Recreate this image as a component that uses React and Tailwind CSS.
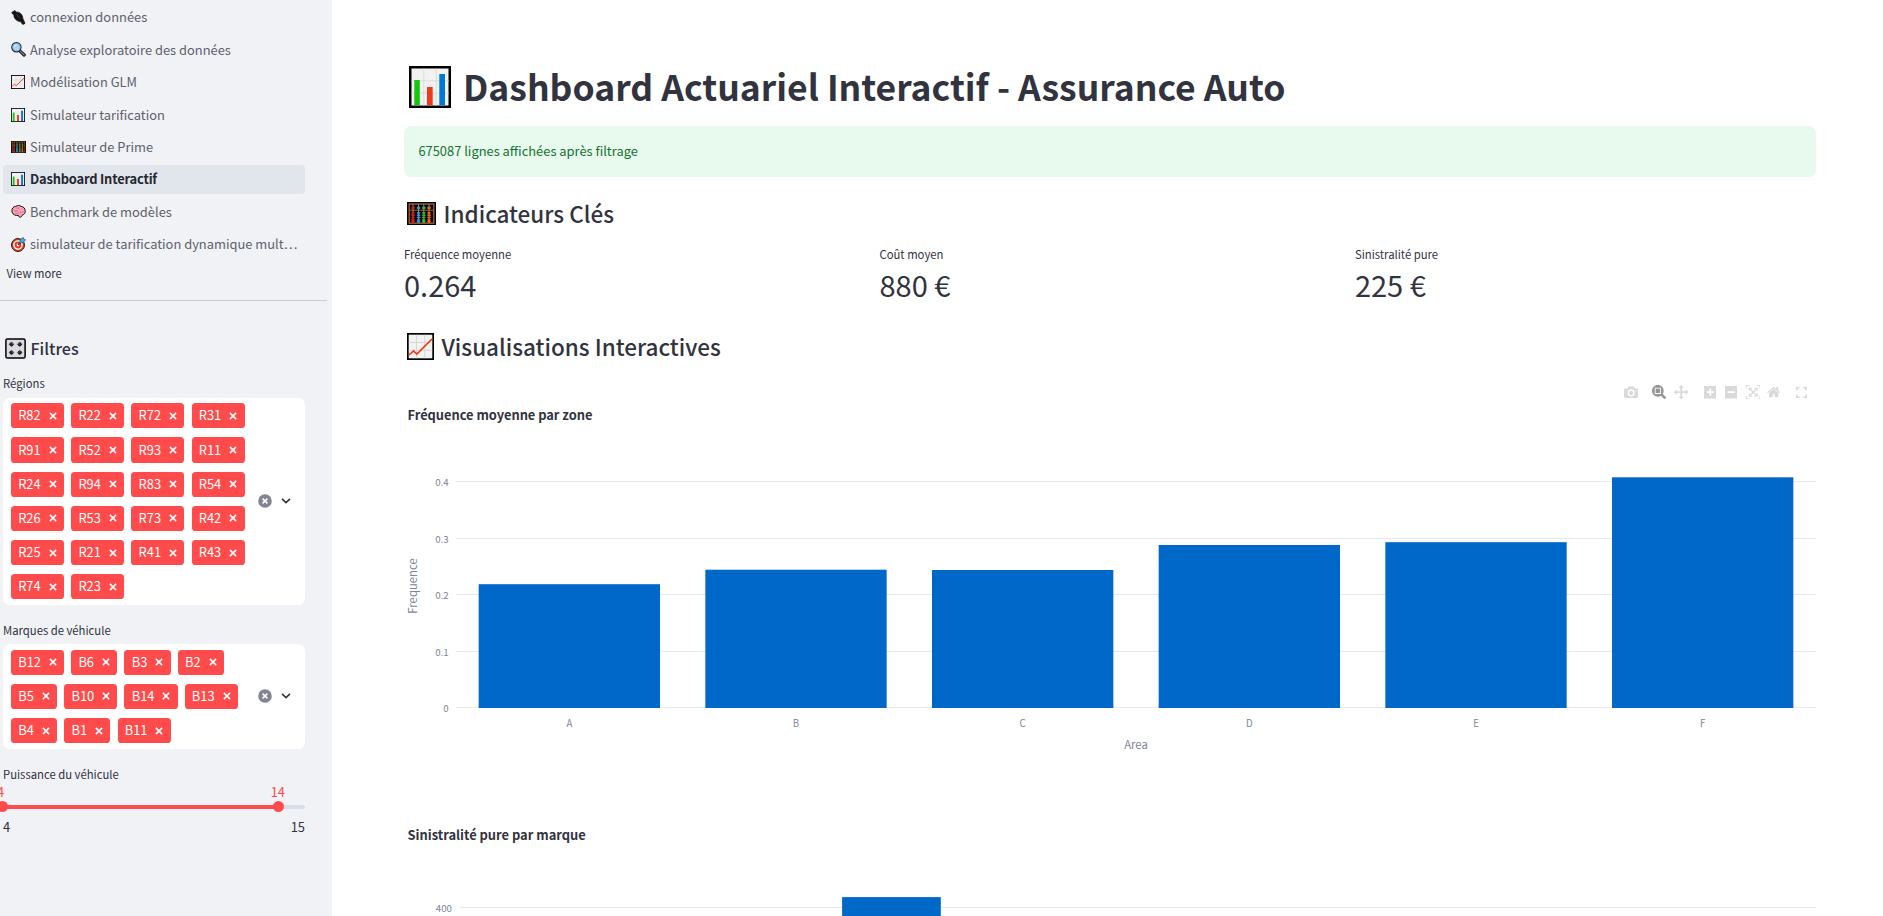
import React from "react";

const FONT = "font-['Noto_Sans_CJK_SC','Noto_Sans_CJK_JP','Open_Sans',sans-serif]";

/* ---------- emoji-like pictograms ---------- */

function ChartUp({ className }) {
  return (
    <svg viewBox="0 0 27 27" className={className}>
      <rect x="0" y="0" width="27" height="27" fill="#000" />
      <rect x="1.7" y="1.7" width="23.6" height="23.6" fill="#f2f2f2" />
      <path d="M9.5 1.7V25.3M17.7 1.7V25.3M1.7 9.5H25.3M1.7 17.3H25.3" stroke="#d2d2d2" strokeWidth="0.9" />
      <path d="M2 22L6.5 17.8L9.8 21L25 6" fill="none" stroke="#f03a17" strokeWidth="1.7" />
    </svg>
  );
}

function BarChart({ className }) {
  return (
    <svg viewBox="0 0 42 42" className={className}>
      <rect width="42" height="42" fill="#000" />
      <rect x="2.5" y="2.5" width="37" height="37" fill="#f2f2f2" />
      <path d="M14.8 2.5V39.5M27.2 2.5V39.5M2.5 14.8H39.5M2.5 27.2H39.5" stroke="#dcdcdc" strokeWidth="1" />
      <rect x="5.3" y="14" width="5.5" height="25.2" fill="#16c60c" />
      <rect x="18" y="21" width="5.7" height="18.2" fill="#f03a17" />
      <rect x="30.3" y="8" width="5.7" height="31.2" fill="#0078d7" />
    </svg>
  );
}

function Abacus({ className }) {
  const cols = [
    { x: 6, c: "#e81224" },
    { x: 11.5, c: "#3a96dd" },
    { x: 16.8, c: "#2dbb2d" },
    { x: 22, c: "#f7630c" },
  ];
  return (
    <svg viewBox="0 0 29 23" className={className} preserveAspectRatio="none">
      <rect width="29" height="23" fill="#000" />
      <rect x="2.2" y="2" width="24.6" height="19.2" fill="none" stroke="#a0673c" strokeWidth="1.3" />
      <path d="M2 8.2H27" stroke="#a0673c" strokeWidth="1" />
      {cols.map((k) => (
        <g key={k.x}>
          <path d={`M${k.x} 2.2V21`} stroke="#c9a184" strokeWidth="0.8" />
          <ellipse cx={k.x} cy="5.9" rx="1.9" ry="1.3" fill={k.c} />
          {[11, 13.3, 15.6, 17.9, 19.8].map((y) => (
            <ellipse key={y} cx={k.x} cy={y} rx="1.9" ry="1" fill={k.c} />
          ))}
        </g>
      ))}
    </svg>
  );
}

function Plug({ className }) {
  return (
    <svg viewBox="0 0 15 15" className={className}>
      <path d="M0.8 2.4L4 0.6L5.2 2.2C8.4 1.8 11.6 4 11.8 8.4L14 13.4L11.8 14.4L9.4 11.6C5.2 11.2 2.5 7.8 3 4.8L1.2 3.6Z" fill="#161616" stroke="#111" strokeWidth="0.8" />
      <path d="M5.5 4.2L8.5 8.2" stroke="#4c4c4c" strokeWidth="0.7" />
    </svg>
  );
}

function Magnifier({ className }) {
  return (
    <svg viewBox="0 0 15 15" className={className}>
      <path d="M8.8 8.8L13.2 13" stroke="#16191c" strokeWidth="3.2" strokeLinecap="round" />
      <path d="M9.4 9.4L13.1 12.9" stroke="#8a959c" strokeWidth="1.3" strokeLinecap="round" />
      <circle cx="5.4" cy="5.2" r="4.6" fill="#a5d4f7" stroke="#1d2a33" strokeWidth="1.2" />
      <circle cx="5.4" cy="5.2" r="3.7" fill="none" stroke="#7ba8c8" strokeWidth="0.6" />
      <path d="M3.2 4.8A2.4 2.4 0 0 1 5.4 2.8" stroke="#e3f3fe" strokeWidth="0.9" fill="none" />
    </svg>
  );
}

function Brain({ className }) {
  return (
    <svg viewBox="0 0 15 13" className={className}>
      <path d="M1 6.8C0.3 3.6 2.6 1.4 4.8 1.3C6.6 0.2 9 0.4 10.2 1.4C12.6 1.6 14.2 3.6 14.1 5.8C14.6 8.2 13 9.6 11.6 9.8C11.2 11 10 12.3 9 12.3C7.8 12.2 7.8 11 7.4 10.4C4.4 10.8 1.6 9.6 1 6.8Z" fill="#f4a3b4" stroke="#1c1114" strokeWidth="1" />
      <path d="M3 6.2C4.2 4.8 5.4 6.8 7 5.6M5 2.8C6.4 3.8 7.6 2.4 8.6 4M9 7.4C10.6 8 11.4 6.2 12.8 6.8M4.4 8.2C5.6 7.4 6.4 8.8 7.6 8" stroke="#d9687f" strokeWidth="0.8" fill="none" />
    </svg>
  );
}

function Dart({ className }) {
  return (
    <svg viewBox="0 0 15 15" className={className}>
      <circle cx="7" cy="8" r="6.5" fill="#e93a1c" stroke="#151515" strokeWidth="0.9" />
      <circle cx="7" cy="8" r="4.1" fill="none" stroke="#fff" strokeWidth="1.4" />
      <circle cx="7" cy="8" r="1.4" fill="#fff" />
      <path d="M7 8L11 4" stroke="#16334a" strokeWidth="1.2" />
      <path d="M8.6 6.2L9.4 2.8L12.2 0.3L12.7 2.2L14.7 2.7L12.2 5.4Z" fill="#2fb4ea" stroke="#12506f" strokeWidth="0.6" />
    </svg>
  );
}

function ControlKnobs({ className }) {
  return (
    <svg viewBox="0 0 21 21" className={className}>
      <rect x="0.9" y="0.9" width="19.2" height="19.2" rx="1.6" fill="#dcdce0" stroke="#000" strokeWidth="1.5" />
      {[[6.5, 6.3], [14.7, 6.3], [6.5, 14.6], [14.7, 14.6]].map(([x, y], i) => (
        <g key={i}>
          <path d={`M${x - 3} ${y}H${x + 3}M${x} ${y - 2.8}V${y + 2.8}`} stroke="#a9a9ae" strokeWidth="0.8" />
          <circle cx={x} cy={y} r="2.1" fill="#1b1b1d" />
          <circle cx={i % 2 ? x - 0.7 : x + 0.6} cy={y - 0.6} r="0.7" fill="#77777c" />
        </g>
      ))}
    </svg>
  );
}

/* ---------- sidebar ---------- */

const NAV = [
  { label: "connexion données", icon: <Plug className="h-[15px] w-[15px]" /> },
  { label: "Analyse exploratoire des données", icon: <Magnifier className="h-[15px] w-[15px]" /> },
  { label: "Modélisation GLM", icon: <ChartUp className="h-[14px] w-[14px]" /> },
  { label: "Simulateur tarification", icon: <BarChart className="h-[14px] w-[14px]" /> },
  { label: "Simulateur de Prime", icon: <Abacus className="h-[12px] w-[15px]" /> },
  { label: "Dashboard Interactif", icon: <BarChart className="h-[14px] w-[14px]" />, active: true },
  { label: "Benchmark de modèles", icon: <Brain className="h-[13px] w-[15px]" /> },
  { label: "simulateur de tarification dynamique mult…", icon: <Dart className="h-[15px] w-[15px]" /> },
];

const REGIONS = [
  "R82", "R22", "R72", "R31", "R91", "R52", "R93", "R11", "R24", "R94", "R83",
  "R54", "R26", "R53", "R73", "R42", "R25", "R21", "R41", "R43", "R74", "R23",
];
const MARQUES = ["B12", "B6", "B3", "B2", "B5", "B10", "B14", "B13", "B4", "B1", "B11"];

function Tag({ label }) {
  return (
    <span className={`flex h-[25.2px] items-center rounded-[3.6px] bg-[#ff4b4b] pl-[7.2px] text-white ${label.length > 2 ? "w-[53.1px]" : "w-[46.2px]"}`}>
      <span className="flex-1 text-[12.9px] leading-none">{label}</span>
      <svg viewBox="0 0 8 8" className="mr-[7.2px] h-[8px] w-[8px]">
        <path d="M0.9 0.9L7.1 7.1M7.1 0.9L0.9 7.1" stroke="#fff" strokeWidth="1.6" />
      </svg>
    </span>
  );
}

function MultiSelect({ values, className }) {
  return (
    <div className={`flex w-[302px] items-center rounded-[7.2px] bg-white ${className}`}>
      <div className="ml-[8px] flex w-[245px] flex-wrap gap-x-[7.1px] gap-y-[9px]">
        {values.map((v) => (
          <Tag key={v} label={v} />
        ))}
      </div>
      <svg viewBox="0 0 14 14" className="ml-[1.7px] h-[14px] w-[14px]">
        <circle cx="7" cy="7" r="6.8" fill="#808495" />
        <path d="M4.6 4.6L9.4 9.4M9.4 4.6L4.6 9.4" stroke="#fff" strokeWidth="1.6" />
      </svg>
      <svg viewBox="0 0 10 6" className="ml-[9.8px] h-[6px] w-[10px]">
        <path d="M1 0.8L5 4.6L9 0.8" stroke="#31333f" strokeWidth="1.6" fill="none" />
      </svg>
    </div>
  );
}

function Sidebar() {
  return (
    <aside className="h-[916px] w-[332px] shrink-0 overflow-hidden bg-[#f0f2f6] text-[#31333f]">
      <nav className="flex flex-col gap-[3.6px] pl-[3px] pt-[3px]">
        {NAV.map((n) => (
          <div
            key={n.label}
            className={`flex h-[28.8px] w-[302px] items-center rounded-[3.6px] pl-[8px] ${n.active ? "bg-[#e1e6ed] font-bold tracking-[-0.19px] text-[#262730]" : "text-[#5f616b]"}`}
          >
            <span className="flex w-[19px] items-center">{n.icon}</span>
            <span className="whitespace-nowrap text-[12.9px] leading-[20px]">{n.label}</span>
          </div>
        ))}
      </nav>
      <div className="mt-[4.8px] pl-[6.5px] text-[11.3px] leading-[20px]">View more</div>
      <div className="mt-[17px] h-px w-[327px] bg-[#c9cbd1]" />
      <div className="mt-[35px] flex h-[24px] items-center pl-[4.5px]">
        <ControlKnobs className="h-[21px] w-[21px]" />
        <h2 className="ml-[5px] text-[16.1px] font-medium leading-[24px]">Filtres</h2>
      </div>
      <div className="pl-[3px]">
        <div className="mt-[13px] text-[11.3px] leading-[20px]">Régions</div>
        <MultiSelect values={REGIONS} className="mt-[4.5px] h-[207px]" />
        <div className="mt-[15px] text-[11.3px] leading-[20px]">Marques de véhicule</div>
        <MultiSelect values={MARQUES} className="mt-[4px] h-[105px]" />
        <div className="mt-[15px] text-[11.3px] leading-[20px]">Puissance du véhicule</div>
        <div className="flex h-[16px] w-[302px] justify-between text-[12.9px] leading-[16px] text-[#ff4b4b]">
          <span className="-ml-[6px]">4</span>
          <span className="mr-[20px]">14</span>
        </div>
        <div className="relative mt-[5px] h-[4px] w-[302px] rounded-full bg-[#d9deea]">
          <div className="h-[4px] w-[275px] bg-[#ff4b4b]" />
          <div className="absolute -left-[6px] -top-[3.5px] h-[11px] w-[11px] rounded-full bg-[#ff4b4b]" />
          <div className="absolute left-[269.5px] -top-[3.5px] h-[11px] w-[11px] rounded-full bg-[#ff4b4b]" />
        </div>
        <div className="mt-[8px] flex w-[302px] justify-between text-[12.9px] leading-[20px]">
          <span>4</span>
          <span>15</span>
        </div>
      </div>
    </aside>
  );
}

/* ---------- charts ---------- */

const ICONS = {
  camera: [1000, "m500 450c-83 0-150-67-150-150 0-83 67-150 150-150 83 0 150 67 150 150 0 83-67 150-150 150z m400 150h-120c-16 0-34 13-39 29l-31 93c-6 15-23 28-40 28h-340c-16 0-34-13-39-28l-31-94c-6-15-23-28-40-28h-120c-55 0-100-45-100-100v-450c0-55 45-100 100-100h800c55 0 100 45 100 100v450c0 55-45 100-100 100z m-400-550c-138 0-250 112-250 250 0 138 112 250 250 250 138 0 250-112 250-250 0-138-112-250-250-250z m365 380c-19 0-35 16-35 35 0 19 16 35 35 35 19 0 35-16 35-35 0-19-16-35-35-35z"],
  zoom: [1000, "m1000-25l-250 251c40 63 63 138 63 218 0 224-182 406-407 406-224 0-406-182-406-406s183-406 407-406c80 0 155 22 218 62l250-250 125 125z m-812 250l0 438 437 0 0-438-437 0z m62 375l313 0 0-312-313 0 0 312z"],
  pan: [1000, "m1000 350l-187 188 0-125-250 0 0 250 125 0-188 187-187-187 125 0 0-250-250 0 0 125-188-188 186-187 0 125 252 0 0-250-125 0 187-188 188 188-125 0 0 250 250 0 0-126 187 188z"],
  plus: [875, "m1 787l0-875 875 0 0 875-875 0z m687-500l-187 0 0-187-125 0 0 187-188 0 0 125 188 0 0 187 125 0 0-187 187 0 0-125z"],
  minus: [875, "m0 788l0-876 875 0 0 876-875 0z m688-500l-500 0 0 125 500 0 0-125z"],
  auto: [1000, "m250 850l-187 0-63 0 0-62 0-188 63 0 0 188 187 0 0 62z m688 0l-188 0 0-62 188 0 0-188 62 0 0 188 0 62-62 0z m-875-938l0 188-63 0 0-188 0-62 63 0 187 0 0 62-187 0z m875 188l0-188-188 0 0-62 188 0 62 0 0 62 0 188-62 0z m-125 188l-1 0-93-94-156 156 156 156 92-93 2 0 0 250-250 0 0-2 93-92-156-156-156 156 94 92 0 2-250 0 0-250 0 0 93 93 157-156-157-156-93 94 0 0 0-250 250 0 0 0-94 93 156 157 156-157-93-93 0 0 250 0 0 250z"],
  home: [928.6, "m786 296v-267q0-15-11-26t-25-10h-214v214h-143v-214h-214q-15 0-25 10t-11 26v267q0 1 0 2t0 2l321 264 321-264q1-1 1-4z m124 39l-34-41q-5-5-12-6h-2q-7 0-12 3l-386 322-386-322q-7-4-13-4-7 2-12 7l-35 41q-4 5-3 13t6 12l401 334q18 15 42 15t43-15l136-114v109q0 8 5 13t13 5h107q8 0 13-5t5-13v-227l122-102q5-5 6-12t-4-13z"],
};

function BarIcon({ name, className }) {
  const [w, d] = ICONS[name];
  return (
    <svg viewBox={`0 0 ${w} 1000`} className={`h-[14.4px] ${className}`}>
      <path d={d} transform="matrix(1 0 0 -1 0 850)" fill="currentColor" />
    </svg>
  );
}

function ModeBar() {
  return (
    <div className="flex h-[16px] items-center pl-[1220px] text-[#d9d9d9]">
      <BarIcon name="camera" className="w-[14.4px]" />
      <BarIcon name="zoom" className="ml-[13.4px] w-[14.4px] text-[#969696]" />
      <BarIcon name="pan" className="ml-[7.4px] w-[14.4px]" />
      <BarIcon name="plus" className="ml-[15.6px] w-[12.6px]" />
      <BarIcon name="minus" className="ml-[8.4px] w-[12.6px]" />
      <BarIcon name="auto" className="ml-[8.4px] w-[14.4px]" />
      <BarIcon name="home" className="ml-[7.2px] w-[13.4px]" />
      <svg viewBox="0 0 11 11" className="ml-[15.4px] h-[11px] w-[11px]">
        <path d="M0.8 3.6V0.8H3.6M7.4 0.8H10.2V3.6M10.2 7.4V10.2H7.4M3.6 10.2H0.8V7.4" fill="none" stroke="currentColor" strokeWidth="1.6" />
      </svg>
    </div>
  );
}

/* Tops are given in the chart's own coordinates, whose baseline is y = 232. */
const ZONES = [
  { k: "A", top: 108.2 },
  { k: "B", top: 93.7 },
  { k: "C", top: 94 },
  { k: "D", top: 69 },
  { k: "E", top: 66.2 },
  { k: "F", top: 1.3 },
];
const TICKS = [["0.4", 5], ["0.3", 62], ["0.2", 118], ["0.1", 175], ["0", 231]];

function ZoneChart() {
  return (
    <svg width="1412" height="284" viewBox="0 0 1412 284" className="block overflow-visible" fill="#808495">
      {TICKS.map(([t, y]) => (
        <g key={t}>
          <rect x="52" y={y} width="1360" height="1" fill="#e6e8f0" />
          <text x="44.6" y={y + 4.6} fontSize="9.7" textAnchor="end">{t}</text>
        </g>
      ))}
      {ZONES.map((z, i) => (
        <g key={z.k}>
          <rect x={52 + 226.667 * i + 22.667} y={z.top} width="181.33" height={232 - z.top} fill="#0068c9" />
          <text x={52 + 226.667 * (i + 0.5)} y="251" fontSize="9.7" textAnchor="middle">{z.k}</text>
        </g>
      ))}
      <text x="732" y="273.3" fontSize="11.3" textAnchor="middle">Area</text>
      <text transform="translate(12.6 110) rotate(-90)" fontSize="11.3" textAnchor="middle">Frequence</text>
    </svg>
  );
}

function BrandChart() {
  return (
    <svg width="1412" height="20" viewBox="0 0 1412 20" className="block" fill="#808495">
      <rect x="56" y="11" width="1356" height="1" fill="#e6e8f0" />
      <text x="48" y="15.6" fontSize="9.7" textAnchor="end">400</text>
      <rect x="438.1" y="1.1" width="98.7" height="18.9" fill="#0068c9" />
    </svg>
  );
}

/* ---------- main ---------- */

const METRICS = [
  ["Fréquence moyenne", "0.264"],
  ["Coût moyen", "880 €"],
  ["Sinistralité pure", "225 €"],
];

export default function App() {
  return (
    <div className={`flex h-[916px] w-[1883px] overflow-hidden bg-white text-[#31333f] ${FONT}`}>
      <Sidebar />
      <main className="ml-[72px] flex w-[1412px] flex-col">
        <div className="mt-[63px] flex h-[48px] items-center pl-[5px]">
          <BarChart className="h-[42px] w-[42px]" />
          <h1 className="ml-[12px] whitespace-nowrap pb-[2px] text-[35.5px] font-bold leading-[48px]">
            Dashboard Actuariel Interactif - Assurance Auto
          </h1>
        </div>
        <div className="mt-[15px] flex h-[51px] items-center rounded-[7.2px] bg-[#e8f9ee] pb-[1.5px] pl-[14.4px] text-[12.9px] text-[#177233]">
          675087 lignes affichées après filtrage
        </div>
        <div className="mt-[20px] flex h-[32px] items-center pl-[3px]">
          <Abacus className="h-[23px] w-[29px]" />
          <h3 className="ml-[7.5px] text-[22.5px] font-medium leading-[32px]">Indicateurs Clés</h3>
        </div>
        <div className="mt-[15px] grid grid-cols-3 gap-[14.4px]">
          {METRICS.map(([k, v]) => (
            <div key={k}>
              <div className="text-[11.3px] leading-[20px]">{k}</div>
              <div className="text-[29px] leading-[40px]">{v}</div>
            </div>
          ))}
        </div>
        <div className="mt-[26px] flex h-[32px] items-center pl-[3px]">
          <ChartUp className="h-[27px] w-[27px]" />
          <h3 className="ml-[7.5px] text-[22.5px] font-medium leading-[32px]">Visualisations Interactives</h3>
        </div>
        <div className="mt-[22px]">
          <ModeBar />
        </div>
        <div className="mt-[5px] pl-[3.5px] text-[12.9px] font-bold leading-[20px] tracking-[-0.04px]">Fréquence moyenne par zone</div>
        <div className="mt-[51px]">
          <ZoneChart />
        </div>
        <div className="mt-[65px] pl-[3.5px] text-[12.9px] font-bold leading-[20px]">Sinistralité pure par marque</div>
        <div className="mt-[51px]">
          <BrandChart />
        </div>
      </main>
    </div>
  );
}
